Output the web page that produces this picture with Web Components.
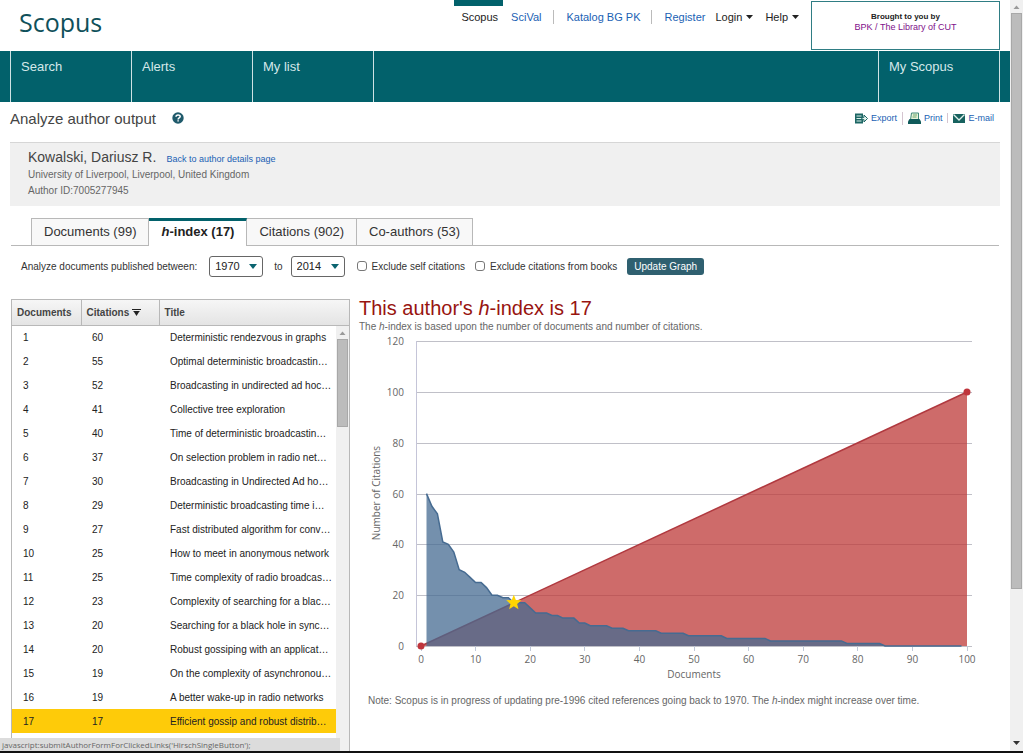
<!DOCTYPE html>
<html lang="en">
<head>
<meta charset="utf-8">
<title>Scopus - Analyze author output</title>
<style>
  :root {
    --font: "Liberation Sans", Arial, sans-serif;
    --chart-font: "Open Sans", "Noto Sans", sans-serif;
    --teal: #02616b;
    --link: #1a5fb4;
    --text: #333;
    --muted: #666;
    --line: #b8b8b8;
  }

  body {
    margin: 0;
    font-family: var(--font);
    font-size: 10px;
    color: var(--text);
    background: #fff;
  }
</style>
</head>
<body>
<scopus-page>
  <top-header></top-header>
  <main-nav></main-nav>
  <page-title>Analyze author output</page-title>
  <author-card name="Kowalski, Dariusz R." author-id="7005277945">University of Liverpool, Liverpool, United Kingdom</author-card>
  <author-tabs></author-tabs>
  <publish-filter></publish-filter>
  <result-columns>
    <document-list slot="list"></document-list>
    <hindex-chart slot="chart"></hindex-chart>
  </result-columns>
</scopus-page>
<status-bar>javascript:submitAuthorFormForClickedLinks('HirschSingleButton');</status-bar>

<script>
class BaseElement extends HTMLElement {
  constructor() {
    super();
    this.attachShadow({ mode: "open" });
  }

  connectedCallback() {
    this.shadowRoot.innerHTML = `<style>${this.constructor.styles}</style>${this.render()}`;
  }
}

class ScrollRail extends BaseElement {
  static get styles() {
    return /* css */`
      :host {
        display: flex;
        flex-direction: column;
        align-items: center;
        background: #f0f0f0;
      }

      svg { display: block; flex: none; }
      .thumb { width: calc(100% - 2px); background: #bcbcbc; box-shadow: inset 0 0 0 1px #a8a8a8; }
    `;
  }

  render() {
    const thumb = this.getAttribute("thumb");
    const rest = this.getAttribute("rest");
    const down = this.hasAttribute("down")
      ? `<svg width="9" height="16"><path d="M1 6h7L4.500 10z" fill="#333"/></svg>` : "";
    return /* html */`
      <svg width="9" height="13"><path d="M1.500 9h6L4.500 5.500z" fill="#999"/></svg>
      <div class="thumb" style="flex: ${thumb}"></div>
      <div style="flex: ${rest}"></div>
      ${down}`;
  }
}

class ScopusPage extends BaseElement {
  static get styles() {
    return /* css */`
      :host {
        display: flex;
        min-height: calc(100vh - 2px);
        border-bottom: 2px solid #111;
      }

      .content { flex: 1; min-width: 0; display: flex; flex-direction: column; }
      scroll-rail { position: sticky; top: 0; width: 13px; height: calc(100vh - 2px); }
    `;
  }

  render() {
    return /* html */`
      <div class="content"><slot></slot></div>
      <scroll-rail thumb="576" rest="146" down></scroll-rail>`;
  }
}

class TopHeader extends BaseElement {
  static get styles() {
    return /* css */`
      :host {
        display: flex;
        align-items: flex-start;
        height: 51px;
        padding-right: 10px;
      }

      .logo {
        flex: 1;
        padding-left: 19px;
        font-family: "Open Sans", "Noto Sans", sans-serif;
        font-size: 25px;
        line-height: 44px;
        color: #0f505a;
      }

      nav { display: flex; align-items: flex-start; font-size: 11px; line-height: 14px; }
      nav > * { margin-top: 10px; }
      a { color: var(--link); text-decoration: none; }
      .current {
        margin-top: 0;
        padding: 4px 5px 0 7px;
        border-top: 6px solid var(--teal);
        color: #222;
      }
      .scival { padding: 0 12px 0 8px; }
      .katalog { padding: 0 11px 0 12px; border-left: 1px solid #bbb; }
      .register { padding: 0 10px 0 12px; border-left: 1px solid #bbb; }
      button {
        display: flex;
        align-items: center;
        gap: 4px;
        padding: 0 12px 0 0;
        border: 0;
        background: none;
        font: inherit;
        color: #222;
      }

      .library {
        box-sizing: border-box;
        width: 189px;
        height: 49px;
        margin-top: 1px;
        padding-top: 9px;
        border: 1px solid #2f7d84;
        text-align: center;
        font-size: 9px;
        line-height: 11px;
      }
      .library strong { display: block; font-size: 8px; line-height: 11px; color: #222; }
      .library a { color: #80108a; }
    `;
  }

  render() {
    const caret = `<svg width="7" height="4"><path d="M0 0h7L3.500 4z" fill="#222"/></svg>`;
    return /* html */`
      <div class="logo">Scopus</div>
      <nav>
        <a class="current" href="#">Scopus</a>
        <a class="scival" href="#">SciVal</a>
        <a class="katalog" href="#">Katalog BG PK</a>
        <a class="register" href="#">Register</a>
        <button type="button">Login ${caret}</button>
        <button type="button">Help ${caret}</button>
      </nav>
      <div class="library"><strong>Brought to you by</strong><a href="#">BPK / The Library of CUT</a></div>`;
  }
}

class MainNav extends BaseElement {
  static get styles() {
    return /* css */`
      :host { display: block; background: var(--teal); }
      nav {
        display: flex;
        height: 51px;
        margin: 0 10px;
        border: solid #cfe2e4;
        border-width: 0 1px;
      }
      a {
        box-sizing: border-box;
        width: 121px;
        padding: 8px 10px;
        border-right: 1px solid #cfe2e4;
        font-size: 13px;
        line-height: 16px;
        color: #d5e8ea;
        text-decoration: none;
      }
      .mine { margin-left: auto; border-right: 0; border-left: 1px solid #cfe2e4; }
    `;
  }

  render() {
    return /* html */`
      <nav>
        <a href="#">Search</a>
        <a href="#">Alerts</a>
        <a href="#">My list</a>
        <a class="mine" href="#">My Scopus</a>
      </nav>`;
  }
}

class PageTitle extends BaseElement {
  static get styles() {
    return /* css */`
      :host {
        display: flex;
        align-items: center;
        height: 32px;
        margin: 0 16px 8px 10px;
      }
      h1 { margin: 0 16px 0 0; font-size: 15px; font-weight: normal; color: #444; }
      .tools { display: flex; align-items: center; margin-left: auto; font-size: 9px; }
      a {
        display: flex;
        align-items: center;
        gap: 3px;
        color: var(--link);
        text-decoration: none;
      }
      a + a { margin-left: 5px; padding-left: 5px; border-left: 1px solid #d5c5d0; }
    `;
  }

  render() {
    return /* html */`
      <h1><slot></slot></h1>
      <svg width="12" height="12" viewBox="0 0 12 12" role="img" aria-label="Help">
        <circle cx="6" cy="6" r="5.700" fill="#1f5a6b"/>
        <path d="M4 4.700C4 2.300 8.200 2.300 8.200 4.600 8.200 6 6.100 5.900 6.100 7.400M6.100 8.300v1.300" fill="none" stroke="#fff" stroke-width="1.500"/>
      </svg>
      <div class="tools">
        <a href="#"><svg width="13" height="11" viewBox="0 0 13 11">
          <path d="M0 0.500h8v10H0z" fill="#1d6664"/>
          <path d="M1.500 3h5M1.500 5.500h5M1.500 8h5" stroke="#d9efe8"/>
          <path d="M7 4.300h2V2l3.500 3.500L9 9V6.700H7z" fill="#e4f3ee" stroke="#1d6664"/>
        </svg>Export</a>
        <a href="#"><svg width="13" height="13" viewBox="0 0 13 13">
          <path d="M2.500 8L3.500 1h7v7z" fill="#e7f2d8" stroke="#3f8a76"/>
          <path d="M5 3h4M4.500 5h4" stroke="#6da66d"/>
          <path d="M0 9.500L1.500 7h10L13 9.500V12H0z" fill="#0f5a5a"/>
        </svg>Print</a>
        <a href="#"><svg width="12" height="9" viewBox="0 0 12 9">
          <path d="M0 0h12v9H0z" fill="#17625f"/>
          <path d="M.500 .500L6 6l5.500-5.500" fill="none" stroke="#e0f0ec" stroke-width="1.300"/>
        </svg>E-mail</a>
      </div>`;
  }
}

class AuthorCard extends BaseElement {
  static get styles() {
    return /* css */`
      :host {
        display: block;
        margin: 0 10px;
        padding: 6px 18px 7px;
        border-top: 1px solid #d6d6d6;
        background: #f0f0f0;
        color: var(--muted);
        line-height: 16px;
      }
      header { display: flex; align-items: baseline; gap: 10px; }
      h2 { margin: 0; font-size: 14px; font-weight: normal; color: #444; }
      a { font-size: 9px; color: var(--link); text-decoration: none; }
      p { margin: 0; }
    `;
  }

  render() {
    return /* html */`
      <header>
        <h2>${this.getAttribute("name")}</h2>
        <a href="#">Back to author details page</a>
      </header>
      <p><slot></slot></p>
      <p>Author ID:${this.getAttribute("author-id")}</p>`;
  }
}

class AuthorTabs extends BaseElement {
  static get styles() {
    return /* css */`
      :host {
        display: flex;
        margin: 12px 11px 0;
        padding-left: 20px;
        border-bottom: 1px solid var(--line);
      }
      a {
        padding: 0 12px;
        border: solid var(--line);
        border-width: 1px 1px 0 0;
        background: #f8f8f8;
        font-size: 13px;
        line-height: 26px;
        color: var(--text);
        text-decoration: none;
      }
      a:first-of-type { border-left-width: 1px; }
      .active {
        margin-bottom: -1px;
        border-top: 3px solid var(--teal);
        background: #fff;
        line-height: 22px;
        font-weight: bold;
        color: #222;
      }
    `;
  }

  render() {
    return /* html */`
      <a href="#">Documents (99)</a>
      <a class="active" href="#" aria-current="page"><i>h</i>-index (17)</a>
      <a href="#">Citations (902)</a>
      <a href="#">Co-authors (53)</a>`;
  }
}

class PublishFilter extends BaseElement {
  static get styles() {
    return /* css */`
      :host { display: block; margin: 10px 11px 23px; }
      form { display: flex; align-items: center; padding-left: 10px; height: 20px; }
      .year { display: flex; align-items: center; gap: 12px; }
      .to { margin: 0 12px 0 11px; gap: 8px; }
      .box { display: flex; align-items: center; }
      select {
        appearance: none;
        width: 54px;
        height: 21px;
        padding: 0 0 0 5px;
        border: 1px solid #666;
        border-radius: 3px;
        background: #fff;
        font: 11px var(--font);
        color: #222;
      }
      .box svg { margin-left: -14px; margin-right: 6px; pointer-events: none; }
      .check { display: flex; align-items: center; gap: 5px; margin-right: 10px; }
      input {
        appearance: none;
        width: 10px;
        height: 10px;
        margin: 0;
        border: 1px solid #777;
        border-radius: 3px;
      }
      button {
        height: 17px;
        padding: 0 7px;
        border: 0;
        border-radius: 3px;
        background: #2f6070;
        font: 10px var(--font);
        color: #fff;
      }
    `;
  }

  render() {
    const arrow = `<svg width="8" height="5"><path d="M0 0h8L4 5z" fill="#0b6470"/></svg>`;
    return /* html */`
      <form>
        <label class="year">Analyze documents published between:
          <span class="box"><select><option>1970</option></select>${arrow}</span></label>
        <label class="year to">to
          <span class="box"><select><option>2014</option></select>${arrow}</span></label>
        <label class="check"><input type="checkbox">Exclude self citations</label>
        <label class="check"><input type="checkbox">Exclude citations from books</label>
        <button type="button">Update Graph</button>
      </form>`;
  }
}

class ResultColumns extends BaseElement {
  static get styles() {
    return /* css */`
      :host {
        flex: 1;
        display: grid;
        grid-template-columns: 339px 1fr;
        gap: 9px;
        margin: 0 10px 0 11px;
      }
    `;
  }

  render() {
    return /* html */`<slot name="list"></slot><slot name="chart"></slot>`;
  }
}

const documents = [
  [60, "Deterministic rendezvous in graphs"],
  [55, "Optimal deterministic broadcastin…"],
  [52, "Broadcasting in undirected ad hoc…"],
  [41, "Collective tree exploration"],
  [40, "Time of deterministic broadcastin…"],
  [37, "On selection problem in radio net…"],
  [30, "Broadcasting in Undirected Ad ho…"],
  [29, "Deterministic broadcasting time i…"],
  [27, "Fast distributed algorithm for conv…"],
  [25, "How to meet in anonymous network"],
  [25, "Time complexity of radio broadcas…"],
  [23, "Complexity of searching for a blac…"],
  [20, "Searching for a black hole in sync…"],
  [20, "Robust gossiping with an applicat…"],
  [19, "On the complexity of asynchronou…"],
  [19, "A better wake-up in radio networks"],
  [17, "Efficient gossip and robust distrib…"]
];

class DocumentList extends BaseElement {
  static get styles() {
    return /* css */`
      :host {
        display: block;
        position: relative;
        border: 1px solid var(--line);
        border-bottom: 0;
      }
      table { width: 100%; border-collapse: collapse; table-layout: fixed; }
      .num { width: 69px; }
      .cit { width: 78px; }
      thead tr { height: 25px; background: linear-gradient(#f6f6f6, #e4e4e4); }
      th {
        padding: 0 0 0 5px;
        border-bottom: 1px solid var(--line);
        text-align: left;
        color: #444;
      }
      th + th { border-left: 1px solid var(--line); }
      tbody tr { height: 24px; }
      td { padding: 0 0 0 11px; white-space: nowrap; color: #222; }
      .selected { background: #fecb09; }
      scroll-rail { position: absolute; top: 26px; right: 0; bottom: 0; width: 13px; }
    `;
  }

  render() {
    const rows = documents.map(([cited, title], i) => `
      <tr${i === 16 ? ` class="selected"` : ""}><td>${i + 1}</td><td>${cited}</td><td>${title}</td></tr>`);
    return /* html */`
      <table>
        <colgroup><col class="num"><col class="cit"><col></colgroup>
        <thead><tr>
          <th>Documents</th>
          <th>Citations <svg width="9" height="7"><path d="M0 0.500h9M1.500 2.500h6" stroke="#222"/><path d="M2 3h5L4.500 7z" fill="#222"/></svg></th>
          <th>Title</th>
        </tr></thead>
        <tbody>${rows.join("")}</tbody>
      </table>
      <scroll-rail thumb="88" rest="325"></scroll-rail>`;
  }
}

class HindexChart extends BaseElement {
  static get styles() {
    return /* css */`
      :host { display: block; color: var(--muted); }
      h2 { margin: 0 0 2px; font-size: 20px; line-height: 18px; font-weight: normal; color: #981410; }
      p { margin: 0; line-height: 18px; }
      .note { margin-left: 9px; }
      svg { display: block; width: 100%; overflow: visible; }
      text { font: 10px var(--chart-font); fill: #666; }
    `;
  }

  // citation counts of the documents after the listed ones, as [value, repeats]
  static get tail() {
    return [[17, 2], [15, 1], [13, 3], [12, 2], [11, 3], [9, 2], [8, 4], [7, 3], [6, 6],
      [5, 5], [4, 7], [3, 8], [2, 14], [1, 7], [0, 15]];
  }

  chart() {
    const x = n => Math.round((62 + n * 5.46) * 10) / 10;
    const y = n => Math.round((311 - n * 2.54) * 10) / 10;

    const cited = documents.map(([count]) => count);
    HindexChart.tail.forEach(([value, repeats]) => cited.push(...Array(repeats).fill(value)));
    const curve = cited.map((count, i) => `${x(i + 1)},${y(count)}`).join(" ");

    const grid = [0, 20, 40, 60, 80, 100, 120].map(n => `
      <path d="M57 ${Math.round(y(n)) + .5}H613" stroke="#c0c0c8"/>
      <text x="45" y="${Math.round(y(n)) + 4}" text-anchor="end">${n}</text>`).join("");
    const ticks = [0, 10, 20, 30, 40, 50, 60, 70, 80, 90, 100].map(n => `
      <path d="M${Math.floor(x(n)) + .5} 311v5" stroke="#c0c8d8"/>
      <text x="${x(n)}" y="328" text-anchor="middle">${n}</text>`).join("");
    const star = [...Array(10).keys()].map(i => {
      const radius = i % 2 ? 3.5 : 8;
      const angle = Math.PI * (i / 5 - .5);
      return `${x(17) + radius * Math.cos(angle)},${y(17) + radius * Math.sin(angle)}`;
    }).join(" ");

    return /* html */`
      <svg viewBox="0 0 641 357" role="img" aria-label="h-index graph">
        ${grid}${ticks}
        <path d="M57.500 6V311" stroke="#c5c5d8"/>
        <polygon points="${x(0)},${y(0)} ${x(100)},${y(100)} ${x(100)},${y(0)}" fill="#bd3938" fill-opacity=".75"/>
        <path d="M${x(0)} ${y(0)}L${x(100)} ${y(100)}" stroke="#b0393f" stroke-width="1.500"/>
        <polygon points="${x(1)},${y(0)} ${curve} ${x(99)},${y(0)}" fill="#466b91" fill-opacity=".75"/>
        <polyline points="${curve}" fill="none" stroke="#466b91" stroke-width="1.500"/>
        <circle cx="${x(0)}" cy="${y(0)}" r="3.500" fill="#bf353c"/>
        <circle cx="${x(100)}" cy="${y(100)}" r="3.500" fill="#bf353c"/>
        <polygon points="${star}" fill="#ffd500"/>
        <text x="335" y="343" text-anchor="middle">Documents</text>
        <text transform="translate(21 158) rotate(-90)" text-anchor="middle">Number of Citations</text>
      </svg>`;
  }

  render() {
    return /* html */`
      <h2>This author's <i>h</i>-index is 17</h2>
      <p style="line-height: 16px">The <i>h</i>-index is based upon the number of documents and number of citations.</p>
      ${this.chart()}
      <p class="note">Note: Scopus is in progress of updating pre-1996 cited references going back to 1970. The <i>h</i>-index might increase over time.</p>`;
  }
}

class StatusBar extends BaseElement {
  static get styles() {
    return /* css */`
      :host {
        position: fixed;
        left: 0;
        bottom: 2px;
        box-sizing: border-box;
        min-width: 340px;
        padding: 0 2px;
        background: #dcdcdc;
        font: 8px/13px var(--chart-font);
        color: #666;
      }
    `;
  }

  render() {
    return `<slot></slot>`;
  }
}

customElements.define("scroll-rail", ScrollRail);
customElements.define("scopus-page", ScopusPage);
customElements.define("top-header", TopHeader);
customElements.define("main-nav", MainNav);
customElements.define("page-title", PageTitle);
customElements.define("author-card", AuthorCard);
customElements.define("author-tabs", AuthorTabs);
customElements.define("publish-filter", PublishFilter);
customElements.define("result-columns", ResultColumns);
customElements.define("document-list", DocumentList);
customElements.define("hindex-chart", HindexChart);
customElements.define("status-bar", StatusBar);
</script>
</body>
</html>
